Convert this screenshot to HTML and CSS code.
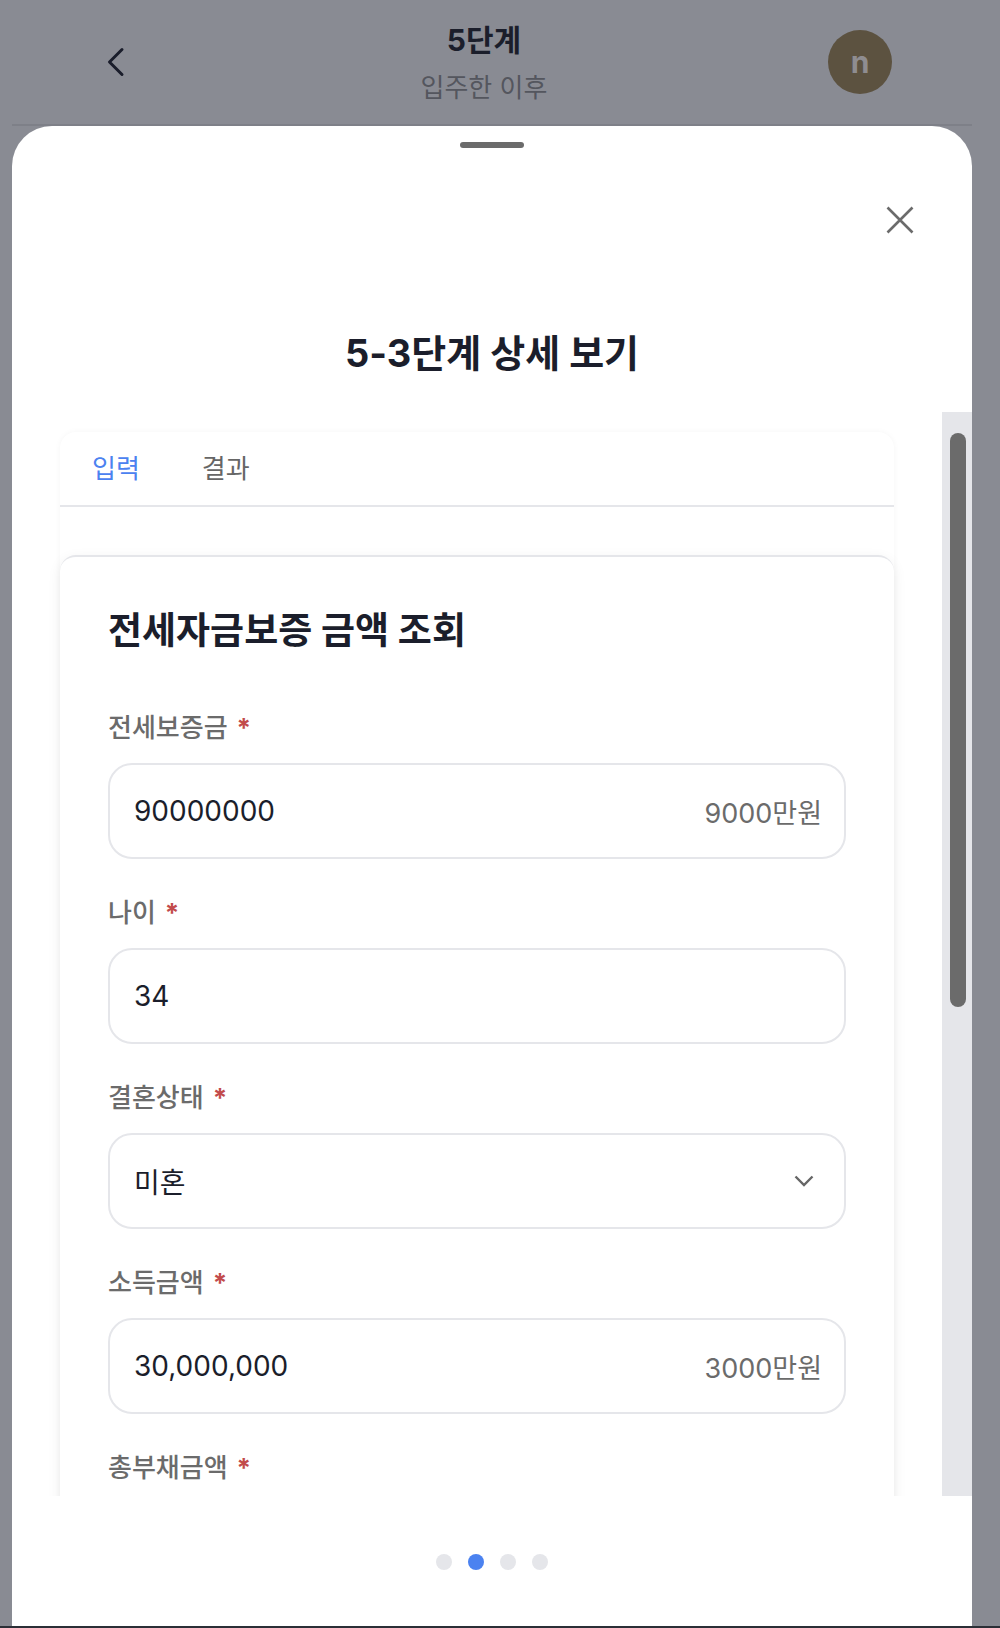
FILE: index.html
```html
<!DOCTYPE html>
<html lang="ko">
<head>
<meta charset="utf-8">
<title>5-3단계 상세 보기</title>
<link rel="stylesheet" href="styles.css">
</head>
<body>
<div class="app">
  <header class="header">
    <button class="back" aria-label="뒤로">
      <svg width="48" height="48" viewBox="0 0 48 48"><polyline points="30,11.5 17.5,24 30,36.5" fill="none" stroke="#1a1d2b" stroke-width="3" stroke-linecap="round" stroke-linejoin="round"/></svg>
    </button>
    <div class="header-mid">
      <div class="header-title">5단계</div>
      <div class="header-sub">입주한 이후</div>
    </div>
    <div class="avatar">n</div>
  </header>

  <section class="sheet">
    <div class="handle"></div>
    <div class="close-row">
      <svg width="28" height="28" viewBox="0 0 28 28"><path d="M1.5 1.5 L26.5 26.5 M26.5 1.5 L1.5 26.5" stroke="#6b6b6b" stroke-width="2.6" fill="none"/></svg>
    </div>
    <h1 class="sheet-title">5-3단계 상세 보기</h1>

    <div class="scroll">
      <div class="scroll-content">
        <div class="panel">
          <div class="tabbar">
            <div class="tab active">입력</div>
            <div class="tab">결과</div>
          </div>
          <div class="spacer"></div>
          <div class="form-card">
            <h2 class="form-title">전세자금보증 금액 조회</h2>

            <div class="field">
              <div class="label">전세보증금<span class="req">*</span></div>
              <div class="input"><span class="value">90000000</span><span class="suffix">9000만원</span></div>
            </div>
            <div class="field">
              <div class="label">나이<span class="req">*</span></div>
              <div class="input"><span class="value">34</span></div>
            </div>
            <div class="field">
              <div class="label">결혼상태<span class="req">*</span></div>
              <div class="input select"><span class="value">미혼</span>
                <svg width="20" height="12" viewBox="0 0 20 12"><polyline points="1.5,1.5 10,10 18.5,1.5" fill="none" stroke="#666" stroke-width="2.4"/></svg>
              </div>
            </div>
            <div class="field">
              <div class="label">소득금액<span class="req">*</span></div>
              <div class="input"><span class="value">30,000,000</span><span class="suffix">3000만원</span></div>
            </div>
            <div class="field">
              <div class="label">총부채금액<span class="req">*</span></div>
              <div class="input"></div>
            </div>
          </div>
        </div>
      </div>
      <div class="track"><div class="thumb"></div></div>
    </div>

    <div class="dots">
      <span class="dot"></span>
      <span class="dot on"></span>
      <span class="dot"></span>
      <span class="dot"></span>
    </div>
  </section>
</div>
<div class="bottom-strip"></div>
</body>
</html>
```

FILE: styles.css
```css
* { box-sizing: border-box; }

html, body {
  margin: 0;
  padding: 0;
}

body {
  width: 1000px;
  height: 1628px;
  overflow: hidden;
  background: #898b93;
  font-family: Inter, "Noto Sans CJK KR", sans-serif;
  color: #1b1e2b;
}

.app {
  margin-left: 12px;
  width: 960px;
}

.header {
  height: 126px;
  border-bottom: 2px solid #7e8088;
  display: flex;
  align-items: center;
  justify-content: space-between;
  padding: 0 80px;
}

.back {
  width: 48px;
  height: 48px;
  padding: 0;
  border: 0;
  background: none;
  display: flex;
}

.header-mid {
  text-align: center;
  padding-top: 4px;
}

.header-title {
  font-size: 30px;
  font-weight: 700;
  line-height: 40px;
  color: #1b1e2b;
}

.header-sub {
  font-size: 26px;
  line-height: 40px;
  margin-top: 8px;
  color: #54565e;
}

.avatar {
  width: 64px;
  height: 64px;
  border-radius: 50%;
  background: #5c5240;
  color: #8f8d90;
  font-size: 30px;
  font-weight: 700;
  display: flex;
  align-items: center;
  justify-content: center;
}

.sheet {
  background: #fff;
  border-radius: 40px 40px 0 0;
  height: 1500px;
  display: flex;
  flex-direction: column;
}

.handle {
  width: 64px;
  height: 6px;
  border-radius: 3px;
  background: #6b6b6b;
  margin: 16px auto 0;
}

.close-row {
  margin-top: 42px;
  height: 60px;
  display: flex;
  align-items: center;
  justify-content: flex-end;
  padding-right: 58px;
}

.sheet-title {
  margin: 78px 0 0;
  font-size: 38px;
  font-weight: 700;
  line-height: 50px;
  text-align: center;
  color: #1b1e2b;
}

.scroll {
  margin-top: 34px;
  height: 1084px;
  display: flex;
}

.scroll-content {
  flex: 1;
  overflow: hidden;
  padding: 20px 48px 0;
}

.track {
  width: 30px;
  background: #e5e6ea;
  padding: 21px 6px 0 8px;
}

.thumb {
  height: 574px;
  border-radius: 8px;
  background: #6b6b6b;
}

.panel {
  background: #fff;
  border-radius: 16px 16px 0 0;
  box-shadow: 0 0 6px rgba(0, 0, 0, 0.04);
}

.tabbar {
  height: 75px;
  display: flex;
  align-items: center;
  border-bottom: 2px solid #e5e6ea;
}

.tab {
  padding: 0 32px;
  font-size: 26px;
  line-height: 36px;
  color: #666;
}

.tab + .tab {
  padding-left: 30px;
}

.tab.active {
  color: #4b82f0;
}

.spacer {
  height: 48px;
}

.form-card {
  background: #fff;
  border-top: 2px solid #e5e6ea;
  border-radius: 16px 16px 0 0;
  box-shadow: 0 4px 14px rgba(0, 0, 0, 0.07);
  padding: 50px 48px 60px;
}

.form-title {
  margin: 0 0 55px;
  font-size: 37px;
  font-weight: 700;
  line-height: 48px;
  color: #1b1e2b;
}

.field + .field {
  margin-top: 36px;
}

.label {
  font-size: 26px;
  line-height: 36px;
  font-weight: 500;
  color: #6b6b6b;
  margin-bottom: 17px;
}

.req {
  color: #c24b4b;
  margin-left: 9px;
  font-size: 26px;
  font-weight: 700;
}

.input {
  height: 96px;
  border: 2px solid #e5e6ea;
  border-radius: 24px;
  padding: 0 22px 0 24px;
  display: flex;
  align-items: center;
  justify-content: space-between;
}

.input.select {
  padding-right: 30px;
}

.value {
  font-size: 28px;
  color: #1b1e2b;
}

.suffix {
  font-size: 27px;
  color: #6b6b6b;
}

.dots {
  display: flex;
  justify-content: center;
  gap: 16px;
  margin-top: 58px;
}

.dot {
  width: 16px;
  height: 16px;
  border-radius: 50%;
  background: #e5e6ea;
}

.dot.on {
  background: #4b82f0;
}

.bottom-strip {
  height: 2px;
  background: #2b2f36;
}
```
